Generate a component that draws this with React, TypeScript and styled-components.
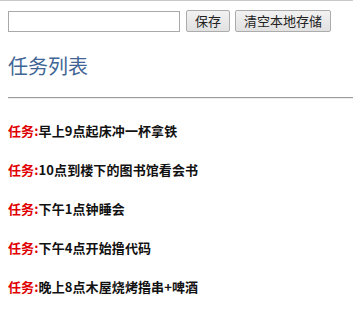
import React from "react";
import styled, { createGlobalStyle } from "styled-components";

const Global = createGlobalStyle`
  html, body { margin: 0; padding: 0; background: #fff; }
  body { font-family: "Noto Sans CJK SC", "Microsoft YaHei", sans-serif; }
`;

const Page = styled.div`
  border-top: 1px solid #c9c9c9;
  padding: 9px 0 0 8px;
`;

const Toolbar = styled.div`
  display: flex;
  align-items: center;
  gap: 5px;
  height: 22px;
`;

const TextInput = styled.input`
  box-sizing: border-box;
  width: 172px;
  height: 21px;
  border: 1px solid #a9a9a9;
  padding: 0 3px;
  margin: 0 1px 0 0;
  font-size: 13px;
  outline: none;
`;

const Button = styled.button`
  box-sizing: border-box;
  height: 22px;
  padding: 0 8px;
  margin: 0;
  border: 1px solid #acacac;
  border-radius: 2px;
  background: linear-gradient(#f2f2f2, #e1e1e1);
  color: #222;
  font-family: "Noto Sans CJK SC", sans-serif;
  font-size: 13px;
  line-height: 20px;
`;

const Title = styled.h3`
  margin: 20px 0 0;
  font-size: 20px;
  font-weight: normal;
  line-height: 28px;
  color: #3f6595;
`;

const Rule = styled.hr`
  margin: 17px 0 0;
  border: 0;
  border-top: 1px solid #9a9a9a;
  border-bottom: 1px solid #eeeeee;
  height: 0;
`;

const List = styled.div`
  display: flex;
  flex-direction: column;
  gap: 22px;
  margin-top: 23px;
`;

const Item = styled.div`
  font-family: "Noto Sans CJK SC", sans-serif;
  font-size: 13px;
  font-weight: bold;
  line-height: 17px;
  color: #111;
  white-space: nowrap;
  letter-spacing: 0.1px;
`;

const Label = styled.span`
  color: #e00000;
`;

const tasks = [
  "早上9点起床冲一杯拿铁",
  "10点到楼下的图书馆看会书",
  "下午1点钟睡会",
  "下午4点开始撸代码",
  "晚上8点木屋烧烤撸串+啤酒",
];

export default function App() {
  return (
    <>
      <Global />
      <Page>
        <Toolbar>
          <TextInput type="text" />
          <Button>保存</Button>
          <Button>清空本地存储</Button>
        </Toolbar>
        <Title>任务列表</Title>
        <Rule />
        <List>
          {tasks.map((t) => (
            <Item key={t}>
              <Label>任务:</Label>
              {t}
            </Item>
          ))}
        </List>
      </Page>
    </>
  );
}
